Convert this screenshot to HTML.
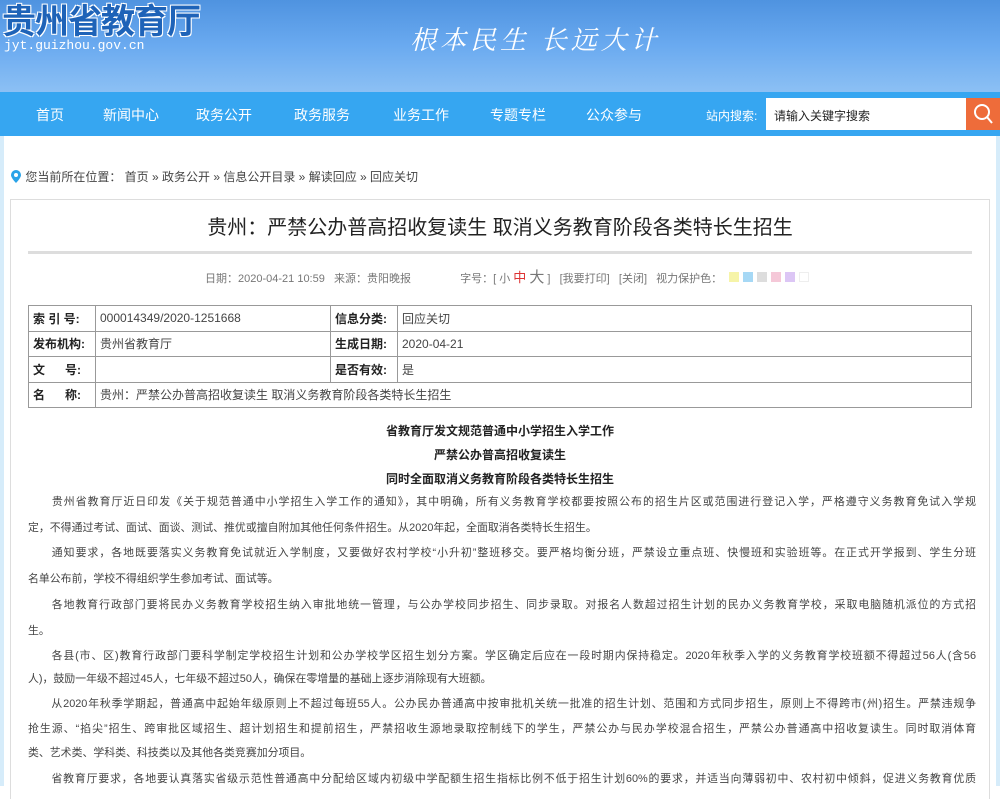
<!DOCTYPE html>
<html><head><meta charset="utf-8"><style>
*{margin:0;padding:0;box-sizing:border-box}
body{width:1000px;height:786px;overflow:hidden;background:#fff;font-family:"Liberation Sans","Noto Sans CJK SC",sans-serif;color:#333;position:relative}
.hdr{position:absolute;left:0;top:0;width:1000px;height:92px;background:linear-gradient(180deg,#4f93e0 0%,#6aaaf0 50%,#8cc0f4 100%)}
.logo{position:absolute;left:2px;top:-6px;font-size:34px;font-weight:bold;color:#1e63b8;letter-spacing:-1px;text-shadow:1px 1px 0 #fff,-1px -1px 0 #fff,1px -1px 0 #fff,-1px 1px 0 #fff}
.url{position:absolute;left:4px;top:38px;font-size:13px;color:#fff;font-family:"Liberation Mono",monospace}
.slogan{position:absolute;left:410px;top:20px;font-size:26px;color:#fff;font-family:"Noto Serif CJK SC",serif;letter-spacing:4px;font-style:italic}
.nav{position:absolute;left:0;top:92px;width:1000px;height:44px;background:#36a6f1}
.nav a{position:absolute;top:13px;font-size:14px;color:#fff;text-decoration:none}
.srch{position:absolute;left:766px;top:98px;width:200px;height:32px;background:#fff;font-size:12px;color:#222;padding:9px 8px}
.btn{position:absolute;left:966px;top:98px;width:34px;height:32px;background:#ee6c3a}
.side{position:absolute;top:136px;width:4px;height:650px;background:#d6ecfa}
.crumb{position:absolute;left:10px;top:168px;font-size:12px;color:#444}
.box{position:absolute;left:10px;top:199px;width:980px;height:600px;border:1px solid #ddd;border-bottom:none}
.title{position:absolute;left:0;width:1000px;top:211px;text-align:center;font-size:20px;color:#222}
.line{position:absolute;left:28px;top:251px;width:944px;height:3px;background:#ddd}
.meta{position:absolute;left:205px;top:266px;font-size:11px;color:#777}
table{position:absolute;left:28px;top:305px;width:944px;border-collapse:collapse;font-size:12px}
td{border:1px solid #999;height:25.5px;padding:0 4px;color:#444}
td.l{font-weight:bold;color:#222;width:67px;text-align:left}
.sub{position:absolute;left:0;width:1000px;text-align:center;font-size:12px;font-weight:bold;color:#222}
.p{position:absolute;left:28px;width:948px;height:16px;overflow:hidden;font-size:10.9px;line-height:16px;color:#444;white-space:normal}
.j{text-align:justify;text-align-last:justify}
</style></head><body>
<div class="hdr">
<div class="logo">贵州省教育厅</div>
<div class="url">jyt.guizhou.gov.cn</div>
<div class="slogan">根本民生 长远大计</div>
</div>
<div class="nav">
<a style="left:36px">首页</a><a style="left:103px">新闻中心</a><a style="left:196px">政务公开</a><a style="left:294px">政务服务</a><a style="left:393px">业务工作</a><a style="left:490px">专题专栏</a><a style="left:586px">公众参与</a>
<a style="left:706px;font-size:12px;top:15px">站内搜索:</a>
</div>
<div class="srch">请输入关键字搜索</div>
<div class="btn"><svg width="34" height="32"><circle cx="16" cy="14" r="7" fill="none" stroke="#fff" stroke-width="2"/><line x1="21" y1="19" x2="26" y2="25" stroke="#fff" stroke-width="2"/></svg></div>
<div class="side" style="left:0"></div><div class="side" style="left:996px"></div>
<div class="crumb"><svg width="12" height="14" style="vertical-align:-2px"><path d="M6 1a5 5 0 0 1 5 5c0 3-5 8-5 8S1 9 1 6a5 5 0 0 1 5-5z" fill="#2aa3e8"/><circle cx="6" cy="6" r="2" fill="#fff"/></svg> 您当前所在位置： 首页 » 政务公开 » 信息公开目录 » 解读回应 » 回应关切</div>
<div class="box"></div>
<div class="title">贵州：严禁公办普高招收复读生 取消义务教育阶段各类特长生招生</div>
<div class="line"></div>
<div class="meta">日期：2020-04-21 10:59 &nbsp; 来源：贵阳晚报 <span style="margin-left:46px">字号：[ 小 <span style="color:#d33;font-size:13px">中</span> <span style="font-size:15px">大</span> ] &nbsp; [我要打印] &nbsp; [关闭] &nbsp; 视力保护色：</span>
<span style="display:inline-block;width:10px;height:10px;background:#f6f4a8;margin-left:4px"></span><span style="display:inline-block;width:10px;height:10px;background:#a6d8f5;margin-left:4px"></span><span style="display:inline-block;width:10px;height:10px;background:#ddd;margin-left:4px"></span><span style="display:inline-block;width:10px;height:10px;background:#f5c8d8;margin-left:4px"></span><span style="display:inline-block;width:10px;height:10px;background:#dcc6f5;margin-left:4px"></span><span style="display:inline-block;width:10px;height:10px;border:1px solid #eee;margin-left:4px"></span></div>
<table>
<tr><td class="l">索 引 号:</td><td style="width:235px">000014349/2020-1251668</td><td class="l">信息分类:</td><td>回应关切</td></tr>
<tr><td class="l">发布机构:</td><td>贵州省教育厅</td><td class="l">生成日期:</td><td>2020-04-21</td></tr>
<tr><td class="l">文&nbsp;&nbsp;&nbsp;&nbsp;&nbsp; 号:</td><td></td><td class="l">是否有效:</td><td>是</td></tr>
<tr><td class="l">名&nbsp;&nbsp;&nbsp;&nbsp;&nbsp; 称:</td><td colspan="3">贵州：严禁公办普高招收复读生 取消义务教育阶段各类特长生招生</td></tr>
</table>
<div class="sub" style="top:422px">省教育厅发文规范普通中小学招生入学工作</div>
<div class="sub" style="top:446px">严禁公办普高招收复读生</div>
<div class="sub" style="top:470px">同时全面取消义务教育阶段各类特长生招生</div>
<div class="p j" style="top:494px">　　贵州省教育厅近日印发《关于规范普通中小学招生入学工作的通知》，其中明确，所有义务教育学校都要按照公布的招生片区或范围进行登记入学，严格遵守义务教育免试入学规</div>
<div class="p" style="top:520px">定，不得通过考试、面试、面谈、测试、推优或擅自附加其他任何条件招生。从2020年起，全面取消各类特长生招生。</div>
<div class="p j" style="top:545px">　　通知要求，各地既要落实义务教育免试就近入学制度，又要做好农村学校“小升初”整班移交。要严格均衡分班，严禁设立重点班、快慢班和实验班等。在正式开学报到、学生分班</div>
<div class="p" style="top:571px">名单公布前，学校不得组织学生参加考试、面试等。</div>
<div class="p j" style="top:597px">　　各地教育行政部门要将民办义务教育学校招生纳入审批地统一管理，与公办学校同步招生、同步录取。对报名人数超过招生计划的民办义务教育学校，采取电脑随机派位的方式招</div>
<div class="p" style="top:623px">生。</div>
<div class="p j" style="top:648px">　　各县(市、区)教育行政部门要科学制定学校招生计划和公办学校学区招生划分方案。学区确定后应在一段时期内保持稳定。2020年秋季入学的义务教育学校班额不得超过56人(含56</div>
<div class="p" style="top:671px">人)，鼓励一年级不超过45人，七年级不超过50人，确保在零增量的基础上逐步消除现有大班额。</div>
<div class="p j" style="top:696px">　　从2020年秋季学期起，普通高中起始年级原则上不超过每班55人。公办民办普通高中按审批机关统一批准的招生计划、范围和方式同步招生，原则上不得跨市(州)招生。严禁违规争</div>
<div class="p j" style="top:721px">抢生源、“掐尖”招生、跨审批区域招生、超计划招生和提前招生，严禁招收生源地录取控制线下的学生，严禁公办与民办学校混合招生，严禁公办普通高中招收复读生。同时取消体育</div>
<div class="p" style="top:745px">类、艺术类、学科类、科技类以及其他各类竞赛加分项目。</div>
<div class="p j" style="top:771px">　　省教育厅要求，各地要认真落实省级示范性普通高中分配给区域内初级中学配额生招生指标比例不低于招生计划60%的要求，并适当向薄弱初中、农村初中倾斜，促进义务教育优质</div>
</body></html>
